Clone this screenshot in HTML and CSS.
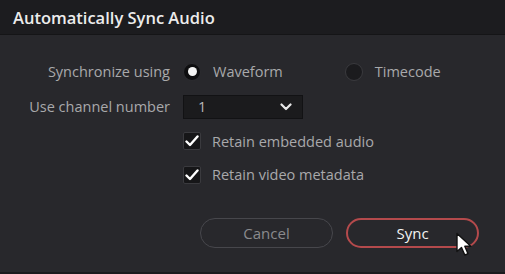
FILE: index.html
```html
<!DOCTYPE html>
<html lang="en">

<head>
    <meta charset="UTF-8">
    <title>Automatically Sync Audio</title>
    <link rel="stylesheet" href="styles.css">
</head>

<body>

    <div class="dialog">
        <div class="title_bar">Automatically Sync Audio</div>

        <div class="content">
            <div class="form">
                <div class="label">Synchronize using</div>
                <div class="radios">
                    <label class="radio">
                        <span class="dot checked"></span>Waveform
                    </label>
                    <label class="radio">
                        <span class="dot"></span>Timecode
                    </label>
                </div>

                <div class="label">Use channel number</div>
                <div class="select">
                    <span>1</span>
                    <svg class="chevron" width="12" height="8" viewBox="0 0 12 8">
                        <path d="M1.5 1.5 L6 6 L10.5 1.5" fill="none" stroke="#e8e8e8" stroke-width="2.2" stroke-linecap="round" stroke-linejoin="round"/>
                    </svg>
                </div>

                <div></div>
                <label class="check">
                    <span class="box">
                        <svg width="14" height="12" viewBox="0 0 14 12"><path d="M1.5 6.5 L5 10 L12.5 1.5" fill="none" stroke="#fff" stroke-width="2.4" stroke-linecap="round" stroke-linejoin="round"/></svg>
                    </span>Retain embedded audio
                </label>

                <div></div>
                <label class="check">
                    <span class="box">
                        <svg width="14" height="12" viewBox="0 0 14 12"><path d="M1.5 6.5 L5 10 L12.5 1.5" fill="none" stroke="#fff" stroke-width="2.4" stroke-linecap="round" stroke-linejoin="round"/></svg>
                    </span>Retain video metadata
                </label>
            </div>

            <div class="buttons">
                <button class="btn">Cancel</button>
                <button class="btn primary">Sync</button>
            </div>
        </div>

        <svg class="cursor" width="22" height="26" viewBox="0 0 22 26">
            <path d="M2 1.5 L2 19.5 L6.5 15.5 L9.8 23 L13 21.6 L9.8 14.3 L15.8 14.3 Z" fill="#fff" stroke="#111" stroke-width="1.4" stroke-linejoin="round"/>
        </svg>
    </div>

</body>

</html>
```

FILE: styles.css
```css
body {
    margin: 0;
    background: #1a1a1d;
    font-family: 'Open Sans', 'Noto Sans', sans-serif;
    overflow: hidden;
}

.dialog {
    position: relative;
    width: 505px;
    height: 272px;
    background: #28282c;
}

.title_bar {
    height: 35px;
    background: #1c1c1f;
    border-bottom: 1px solid #151517;
    color: #ececec;
    font-size: 16.5px;
    font-weight: 600;
    line-height: 36px;
    padding-left: 13px;
    box-sizing: border-box;
}

.content {
    padding-top: 19px;
}

.form {
    display: grid;
    grid-template-columns: 170px auto;
    grid-template-rows: 35px 35px 34px 33px;
    column-gap: 13px;
    align-items: center;
    color: #a9a9ab;
    font-size: 14.5px;
}

.label {
    text-align: right;
}

.radios {
    display: flex;
    gap: 62px;
}

.radio {
    display: flex;
    align-items: center;
    gap: 12px;
}

.dot {
    width: 18px;
    height: 18px;
    border-radius: 50%;
    background: #1b1b1e;
    border: 1px solid #3a3a3e;
    box-sizing: border-box;
    display: flex;
    justify-content: center;
    align-items: center;
}

.dot.checked {
    background: #0e0e10;
    border-color: #2c2c30;
}

.dot.checked::after {
    content: "";
    width: 9px;
    height: 9px;
    border-radius: 50%;
    background: #f4f4f4;
}

.select {
    width: 120px;
    height: 24px;
    background: #1b1b1d;
    border: 1px solid #121214;
    box-sizing: border-box;
    display: flex;
    justify-content: space-between;
    align-items: center;
    padding: 0 10px 0 14px;
    color: #b8b8ba;
}

.check {
    display: flex;
    align-items: center;
    gap: 11px;
}

.box {
    width: 18px;
    height: 18px;
    background: #161618;
    border: 1px solid #3a3a3e;
    border-radius: 2px;
    box-sizing: border-box;
    display: flex;
    justify-content: center;
    align-items: center;
}

.buttons {
    display: flex;
    justify-content: flex-end;
    gap: 13px;
    padding: 27px 26px 0 0;
}

.btn {
    width: 133px;
    height: 30px;
    border-radius: 15px;
    background: transparent;
    border: 1px solid #47474c;
    color: #8a8a8c;
    font-family: 'Open Sans', 'Noto Sans', sans-serif;
    font-size: 15px;
}

.btn.primary {
    border: 2px solid #b44a4c;
    color: #f2f2f2;
}

.cursor {
    position: absolute;
    left: 455px;
    top: 232px;
}
```
